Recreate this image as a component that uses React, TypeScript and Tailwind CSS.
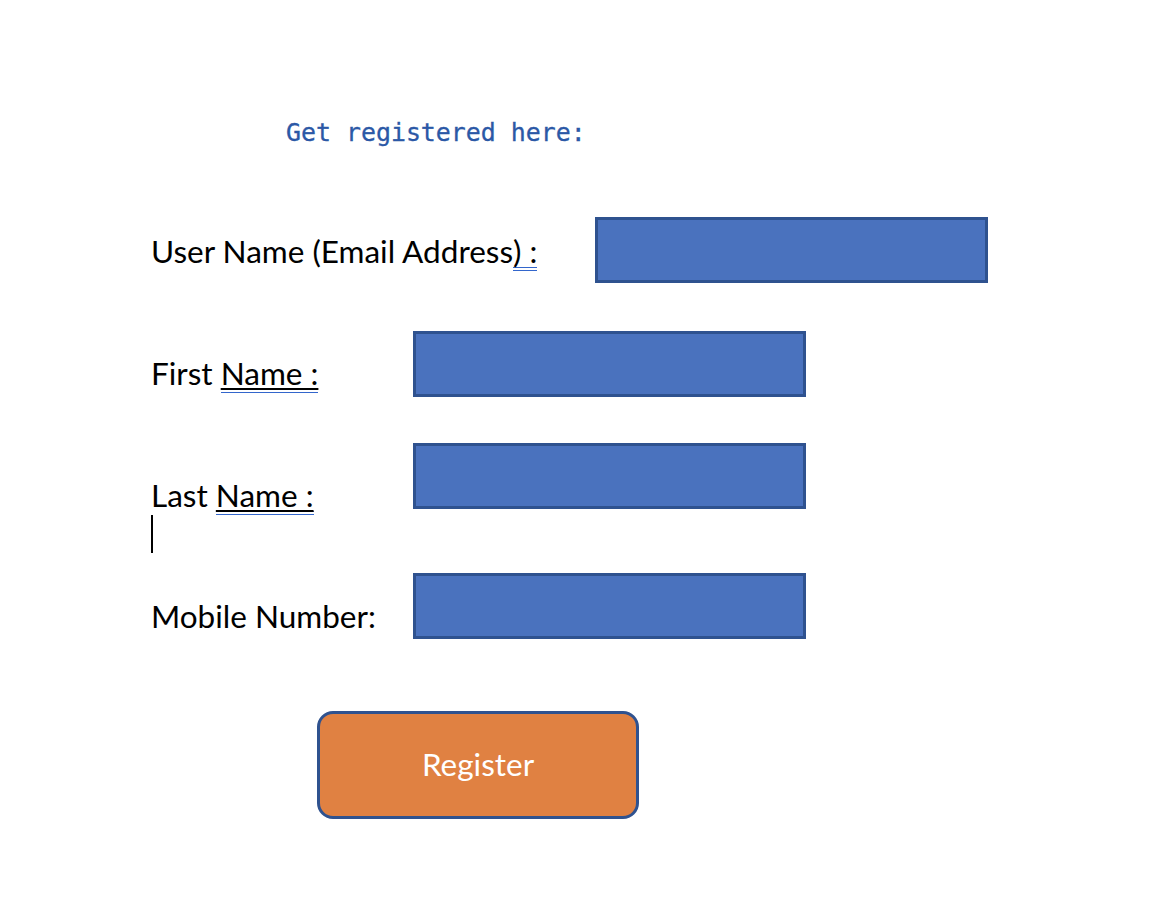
import React from 'react';

const Field: React.FC = () => (
  <div className="h-[66px] w-[393px] shrink-0 border-[3px] border-[#2f528f] bg-[#4a72be]" />
);

const Marked: React.FC<{ children: React.ReactNode }> = ({ children }) => (
  <span className="inline-block border-b-[4px] border-double border-[#3366cc] leading-[32px] underline decoration-[1.5px] underline-offset-[3px]">
    {children}
  </span>
);

export default function App() {
  return (
    <div className="min-h-screen bg-white pl-[151px] pt-[121px] font-['Lato',sans-serif] text-[31.5px] text-black">
      <h1 className="ml-[135px] h-[25px] font-['DejaVu_Sans_Mono',monospace] text-[24.9px] leading-none text-[#2b58a6] [-webkit-text-stroke:0.3px_#2b58a6]">
        Get registered here:
      </h1>

      <div className="mt-[71px] flex h-[66px] items-start">
        <label className="mt-[18px] w-[444px] whitespace-nowrap leading-none">
          User Name (Email Address
          <span className="inline-block border-b-[4px] border-double border-[#3366cc] leading-[32px]">) :</span>
        </label>
        <Field />
      </div>

      <div className="mt-[48px] flex h-[66px] items-start">
        <label className="mt-[26px] w-[262px] whitespace-nowrap leading-none">
          First <Marked>Name :</Marked>
        </label>
        <Field />
      </div>

      <div className="mt-[46px] flex h-[66px] items-start">
        <label className="mt-[36px] w-[262px] whitespace-nowrap leading-none">
          Last <Marked>Name :</Marked>
        </label>
        <Field />
      </div>

      <div className="mt-[6px] h-[38px] w-[2px] bg-black" />

      <div className="mt-[20px] flex h-[66px] items-start">
        <label className="mt-[28px] w-[262px] whitespace-nowrap leading-none">Mobile Number:</label>
        <Field />
      </div>

      <button
        type="button"
        className="ml-[166px] mt-[72px] flex h-[108px] w-[322px] items-center justify-center rounded-[16px] border-[3px] border-[#2f528f] bg-[#e08142] text-[31.5px] text-white"
      >
        Register
      </button>
    </div>
  );
}
